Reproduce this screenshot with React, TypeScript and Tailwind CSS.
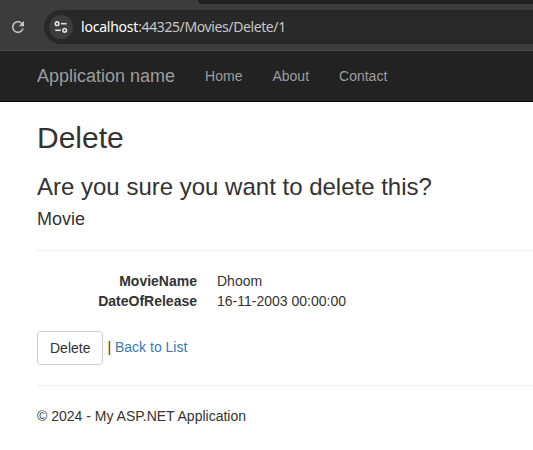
function ReloadIcon() {
  return (
    <svg className="ml-[9px] size-[18px] shrink-0" viewBox="0 0 24 24" fill="#c7c7c7">
      <path d="M17.65 6.35C16.2 4.9 14.21 4 12 4c-4.42 0-7.99 3.58-7.99 8s3.57 8 7.99 8c3.73 0 6.84-2.55 7.73-6h-2.08c-.82 2.33-3.04 4-5.65 4-3.31 0-6-2.69-6-6s2.69-6 6-6c1.66 0 3.14.69 4.22 1.78L13 11h7V4l-2.35 2.35z" />
    </svg>
  );
}

function SiteInfoIcon() {
  return (
    <svg className="size-4" viewBox="0 0 16 16" fill="none" stroke="#dedede" strokeWidth="1.6">
      <circle cx="4.1" cy="4.7" r="1.8" />
      <path d="M8 4.7H13.6" />
      <circle cx="11.7" cy="11.3" r="1.8" />
      <path d="M2.2 11.3H7.8" />
    </svg>
  );
}

function BrowserBar() {
  return (
    <div className="relative flex h-[51px] items-start border-b border-[#494949] bg-[#3c3c3c] pt-[10px]">
      <div className="absolute top-0 right-0 left-[198px] h-1 rounded-bl-[8px] bg-[#202222]" />
      <div className="flex h-[34px] w-[44px] items-center">
        <ReloadIcon />
      </div>
      <div className="flex h-[34px] flex-1 items-center rounded-l-full bg-[#282828] pl-[5px]">
        <div className="flex size-6 items-center justify-center rounded-full bg-[#3c3c3c]">
          <SiteInfoIcon />
        </div>
        <div className="ml-2 font-['Noto_Sans',sans-serif] text-[14px] leading-5 tracking-[-0.39px] whitespace-nowrap text-[#c7c7c7]">
          <span className="tracking-[-0.22px] text-white">localhost</span>:44325/Movies/Delete/1
        </div>
      </div>
    </div>
  );
}

function Navbar() {
  return (
    <nav className="flex h-[51px] items-start border-b border-[#080808] bg-[#222] pl-[37px] text-[#9d9d9d]">
      <a className="mr-[15px] py-[15px] text-[18px] leading-5">Application name</a>
      <a className="px-[15px] py-[15px]">Home</a>
      <a className="px-[15px] py-[15px]">About</a>
      <a className="px-[15px] py-[15px]">Contact</a>
    </nav>
  );
}

export default function App() {
  return (
    <div className="h-[450px] w-full overflow-hidden bg-white font-['Liberation_Sans',Arial,sans-serif] text-[14px] leading-5 text-[#333]">
      <BrowserBar />
      <Navbar />
      <main className="pt-[19px] pl-[37px]">
        <h2 className="text-[30px] leading-[33px]">Delete</h2>
        <h3 className="mt-5 text-[24px] leading-[26.4px]">Are you sure you want to delete this?</h3>
        <h4 className="mt-[10px] text-[18px] leading-[19.8px]">Movie</h4>
        <hr className="my-5 border-t border-[#eee]" />
        <dl className="mb-5 grid grid-cols-[160px_1fr] gap-x-5">
          <dt className="text-right font-bold">MovieName</dt>
          <dd>Dhoom</dd>
          <dt className="text-right font-bold">DateOfRelease</dt>
          <dd>16-11-2003 00:00:00</dd>
        </dl>
        <div className="flex h-[34px] items-center">
          <button className="h-[34px] rounded border border-[#ccc] bg-white px-3 text-[#333]">Delete</button>
          <span className="ml-1 -mt-0.5 whitespace-pre">| <a className="text-[#337ab7]">Back to List</a></span>
        </div>
        <hr className="my-5 border-t border-[#eee]" />
        <footer>© 2024 - My ASP.NET Application</footer>
      </main>
    </div>
  );
}
